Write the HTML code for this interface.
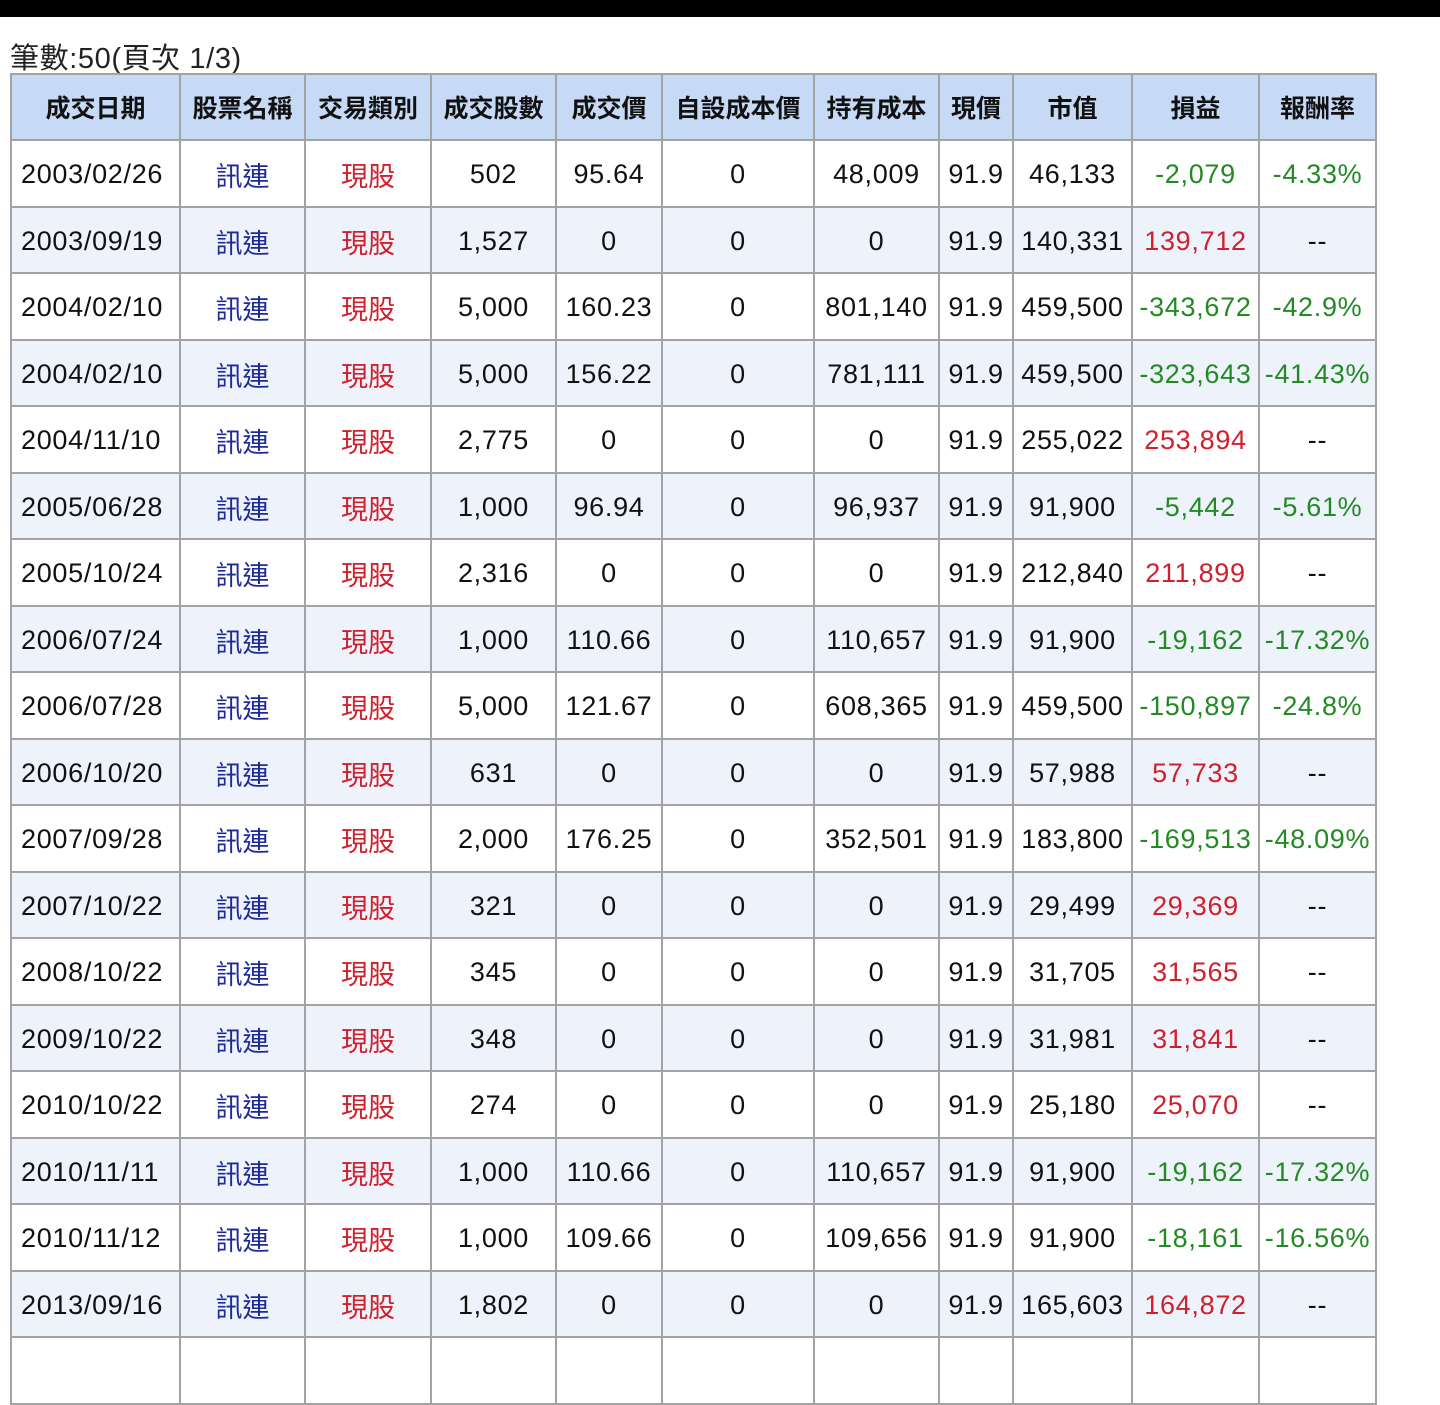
<!DOCTYPE html>
<html><head><meta charset="utf-8"><style>
html,body{margin:0;padding:0;background:#fff;width:1440px;height:1348px;overflow:hidden}
.bar{height:17px;background:#000}
.cap{position:absolute;left:10px;top:35px;font:29px "Liberation Sans","Noto Sans CJK TC",sans-serif;letter-spacing:0.6px;color:#222}
table{position:absolute;left:10px;top:73px;border-collapse:collapse;table-layout:fixed;font:27px "Liberation Sans","Noto Sans CJK TC",sans-serif;letter-spacing:0.7px;color:#111}
td,th{border:2px solid #a3a3a3;text-align:center;padding:0;white-space:nowrap;overflow:hidden}
th{background:#c6daf6;height:64px;font-family:"Noto Sans CJK TC",sans-serif;font-weight:bold;font-size:25px;letter-spacing:0;color:#111}
tr.r td{height:61.5px;padding-top:3px}
tr.r:nth-child(odd) td{background:#eef3fb}
td.d{text-align:left;padding-left:9px}
.b{color:#1e2a9a;font-family:"Noto Sans CJK TC",sans-serif;letter-spacing:0}
.re{color:#d0202e;font-family:"Noto Sans CJK TC",sans-serif;letter-spacing:0}
.p{color:#d0202e}.g{color:#238a23}
</style></head><body>
<div class="bar"></div>
<div class="cap">筆數:50(頁次 1/3)</div>
<table>
<colgroup><col style="width:169px"><col style="width:125px"><col style="width:126px"><col style="width:125px"><col style="width:106px"><col style="width:152px"><col style="width:125px"><col style="width:74px"><col style="width:119px"><col style="width:127px"><col style="width:117px"></colgroup>
<tr><th>成交日期</th><th>股票名稱</th><th>交易類別</th><th>成交股數</th><th>成交價</th><th>自設成本價</th><th>持有成本</th><th>現價</th><th>市值</th><th>損益</th><th>報酬率</th></tr>
<tr class="r"><td class="d">2003/02/26</td><td class="b">訊連</td><td class="re">現股</td><td>502</td><td>95.64</td><td>0</td><td>48,009</td><td>91.9</td><td>46,133</td><td class="g">-2,079</td><td class="g">-4.33%</td></tr>
<tr class="r"><td class="d">2003/09/19</td><td class="b">訊連</td><td class="re">現股</td><td>1,527</td><td>0</td><td>0</td><td>0</td><td>91.9</td><td>140,331</td><td class="p">139,712</td><td>--</td></tr>
<tr class="r"><td class="d">2004/02/10</td><td class="b">訊連</td><td class="re">現股</td><td>5,000</td><td>160.23</td><td>0</td><td>801,140</td><td>91.9</td><td>459,500</td><td class="g">-343,672</td><td class="g">-42.9%</td></tr>
<tr class="r"><td class="d">2004/02/10</td><td class="b">訊連</td><td class="re">現股</td><td>5,000</td><td>156.22</td><td>0</td><td>781,111</td><td>91.9</td><td>459,500</td><td class="g">-323,643</td><td class="g">-41.43%</td></tr>
<tr class="r"><td class="d">2004/11/10</td><td class="b">訊連</td><td class="re">現股</td><td>2,775</td><td>0</td><td>0</td><td>0</td><td>91.9</td><td>255,022</td><td class="p">253,894</td><td>--</td></tr>
<tr class="r"><td class="d">2005/06/28</td><td class="b">訊連</td><td class="re">現股</td><td>1,000</td><td>96.94</td><td>0</td><td>96,937</td><td>91.9</td><td>91,900</td><td class="g">-5,442</td><td class="g">-5.61%</td></tr>
<tr class="r"><td class="d">2005/10/24</td><td class="b">訊連</td><td class="re">現股</td><td>2,316</td><td>0</td><td>0</td><td>0</td><td>91.9</td><td>212,840</td><td class="p">211,899</td><td>--</td></tr>
<tr class="r"><td class="d">2006/07/24</td><td class="b">訊連</td><td class="re">現股</td><td>1,000</td><td>110.66</td><td>0</td><td>110,657</td><td>91.9</td><td>91,900</td><td class="g">-19,162</td><td class="g">-17.32%</td></tr>
<tr class="r"><td class="d">2006/07/28</td><td class="b">訊連</td><td class="re">現股</td><td>5,000</td><td>121.67</td><td>0</td><td>608,365</td><td>91.9</td><td>459,500</td><td class="g">-150,897</td><td class="g">-24.8%</td></tr>
<tr class="r"><td class="d">2006/10/20</td><td class="b">訊連</td><td class="re">現股</td><td>631</td><td>0</td><td>0</td><td>0</td><td>91.9</td><td>57,988</td><td class="p">57,733</td><td>--</td></tr>
<tr class="r"><td class="d">2007/09/28</td><td class="b">訊連</td><td class="re">現股</td><td>2,000</td><td>176.25</td><td>0</td><td>352,501</td><td>91.9</td><td>183,800</td><td class="g">-169,513</td><td class="g">-48.09%</td></tr>
<tr class="r"><td class="d">2007/10/22</td><td class="b">訊連</td><td class="re">現股</td><td>321</td><td>0</td><td>0</td><td>0</td><td>91.9</td><td>29,499</td><td class="p">29,369</td><td>--</td></tr>
<tr class="r"><td class="d">2008/10/22</td><td class="b">訊連</td><td class="re">現股</td><td>345</td><td>0</td><td>0</td><td>0</td><td>91.9</td><td>31,705</td><td class="p">31,565</td><td>--</td></tr>
<tr class="r"><td class="d">2009/10/22</td><td class="b">訊連</td><td class="re">現股</td><td>348</td><td>0</td><td>0</td><td>0</td><td>91.9</td><td>31,981</td><td class="p">31,841</td><td>--</td></tr>
<tr class="r"><td class="d">2010/10/22</td><td class="b">訊連</td><td class="re">現股</td><td>274</td><td>0</td><td>0</td><td>0</td><td>91.9</td><td>25,180</td><td class="p">25,070</td><td>--</td></tr>
<tr class="r"><td class="d">2010/11/11</td><td class="b">訊連</td><td class="re">現股</td><td>1,000</td><td>110.66</td><td>0</td><td>110,657</td><td>91.9</td><td>91,900</td><td class="g">-19,162</td><td class="g">-17.32%</td></tr>
<tr class="r"><td class="d">2010/11/12</td><td class="b">訊連</td><td class="re">現股</td><td>1,000</td><td>109.66</td><td>0</td><td>109,656</td><td>91.9</td><td>91,900</td><td class="g">-18,161</td><td class="g">-16.56%</td></tr>
<tr class="r"><td class="d">2013/09/16</td><td class="b">訊連</td><td class="re">現股</td><td>1,802</td><td>0</td><td>0</td><td>0</td><td>91.9</td><td>165,603</td><td class="p">164,872</td><td>--</td></tr>
<tr class="r"><td class="d">&nbsp;</td><td></td><td></td><td></td><td></td><td></td><td></td><td></td><td></td><td></td><td></td></tr>
</table>
</body></html>
